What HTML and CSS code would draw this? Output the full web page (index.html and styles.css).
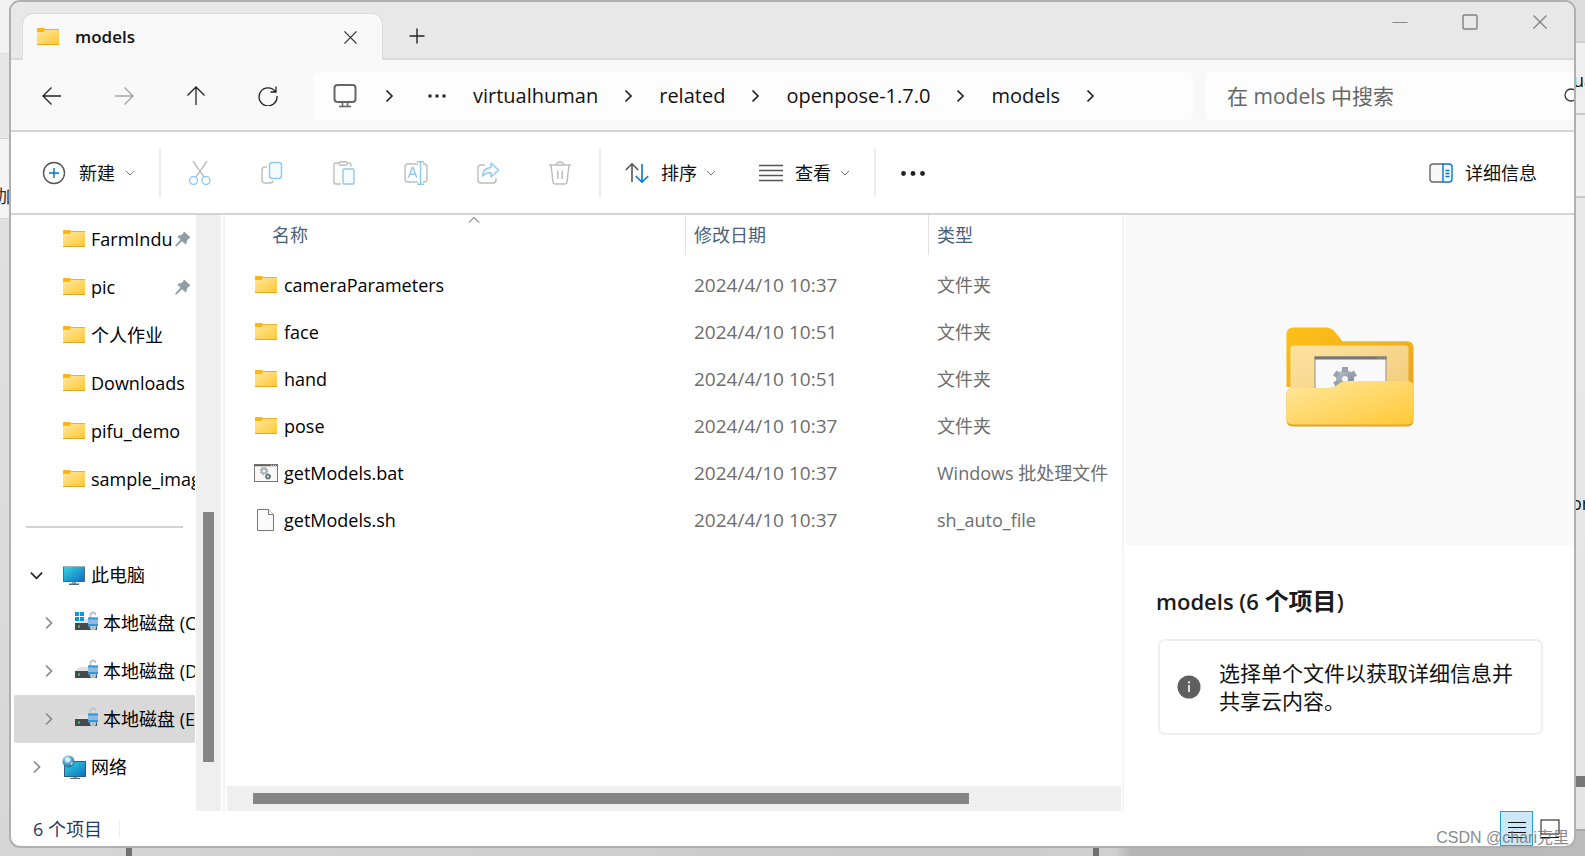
FILE: index.html
```html
<!DOCTYPE html>
<html lang="zh-CN">
<head>
<meta charset="utf-8">
<title>models</title>
<link rel="stylesheet" href="styles.css">
</head>
<body>
<svg class="defs" aria-hidden="true">
  <defs>
    <linearGradient id="gFolder" x1="0" y1="0" x2="1" y2="1"><stop offset="0" stop-color="#ffe79d"/><stop offset="1" stop-color="#ffc936"/></linearGradient>
    <linearGradient id="gBack" x1="0" y1="0" x2="1" y2="1"><stop offset="0" stop-color="#fdc117"/><stop offset="1" stop-color="#e8a420"/></linearGradient>
    <linearGradient id="gInner" x1="0" y1="0" x2="1" y2="1"><stop offset="0" stop-color="#fde3a0"/><stop offset="1" stop-color="#f0c877"/></linearGradient>
    <linearGradient id="gScreen" x1="0" y1="0" x2="1" y2="1"><stop offset="0" stop-color="#35d5e0"/><stop offset="1" stop-color="#0c6fc4"/></linearGradient>
    <linearGradient id="gGear" x1="0" y1="0" x2="1" y2="1"><stop offset="0" stop-color="#b3bcc5"/><stop offset="1" stop-color="#7e8a96"/></linearGradient>
    <radialGradient id="gGlobe" cx="0.4" cy="0.3" r="0.8"><stop offset="0" stop-color="#c4e8f5"/><stop offset="0.5" stop-color="#4fa3c9"/><stop offset="1" stop-color="#1b5e8e"/></radialGradient>
    <symbol id="folder" viewBox="0 0 24 24">
      <path d="M1 5V4q0-1 1-1h6l1.500 1.500H23V19H1z" fill="#fbb91a"/>
      <rect x="1" y="5" width="22" height="14" fill="url(#gFolder)"/>
      <path d="M1 4q0-1 1-1h5.500q1 0 1 1v1.500L7.500 7H1z" fill="#fbb615"/>
      <path d="M9 4.500h14" stroke="#f0b028"/>
      <path d="M1 19.500h22" stroke="#e9a81f"/>
    </symbol>
    <symbol id="pin" viewBox="0 0 16 16"><path d="M9 0.500 15.500 6.500q-.5 1-1.700 1l-2 2.500q.4 2.200-1 3.500L7 10.200 1.500 15.500H.5V14L5.500 8.800 2.300 5.500Q3.500 4 6 4.300L8.300 2.300Q8.200 1 9 .5z" fill="#919ca4"/></symbol>
    <symbol id="pc" viewBox="0 0 24 24">
      <rect x="1" y="3" width="22" height="16" fill="#4a6b80"/><rect x="2" y="4" width="20" height="14" fill="url(#gScreen)"/>
      <path d="M1 3.500h22" stroke="#9fb0ba"/><rect x="10" y="19" width="4" height="2" fill="#9aa7b0"/><rect x="7" y="20.500" width="10" height="1.500" fill="#526675"/>
    </symbol>
    <symbol id="net" viewBox="0 0 24 24">
      <rect x="2" y="6" width="22" height="16" fill="#2c5f80"/><rect x="3" y="7" width="20" height="14" fill="url(#gScreen)"/>
      <rect x="11" y="22" width="4" height="1" fill="#9aa7b0"/><rect x="8" y="23" width="10" height="1" fill="#526675"/>
      <circle cx="6.500" cy="6.500" r="6" fill="url(#gGlobe)"/><path d="M3 3q3-1.500 5 .5T7 7 3.500 6zM8 8l3-1-1 3.500z" fill="#e3f3f8" opacity=".75"/>
    </symbol>
    <symbol id="disk" viewBox="0 0 24 24">
      <path d="M5.500 8H20l3 4H1z" fill="#dfe2e4"/><rect x="1" y="12" width="22" height="7" fill="#454a4c"/><rect x="4" y="14.500" width="2" height="2" fill="#35e04a"/>
      <path d="M16.500 7V4q0-2.500 2.500-2.500t2.500 2.500" fill="none" stroke="#b9c5cd" stroke-width="1.800"/>
      <rect x="14" y="6.500" width="10" height="9" rx="1" fill="#93b9d8"/><path d="M14 7.500h10M14 14h10" stroke="#2e97e4" stroke-width="2"/><path d="M16 15h6v3q-3 2.500-6 0z" fill="#b4bfc7"/>
    </symbol>
    <symbol id="winlogo" viewBox="0 0 10 10"><path d="M0 0h4.500v4.500H0zM5.500 0H10v4.500H5.500zM0 5.500h4.500V10H0zM5.500 5.500H10V10H5.500z" fill="#1295e0"/></symbol>
    <symbol id="right" viewBox="0 0 12 16"><path d="M3 2.500 8.500 8 3 13.500" fill="none" stroke="currentColor" stroke-width="1.700"/></symbol>
    <symbol id="down" viewBox="0 0 16 12"><path d="M2 3 8 9 14 3" fill="none" stroke="currentColor" stroke-width="1.800"/></symbol>
    <symbol id="caret" viewBox="0 0 10 10"><path d="M1 3 5 7 9 3" fill="none" stroke="currentColor"/></symbol>
    <symbol id="cross" viewBox="0 0 16 16"><path d="M1.500 1.500 14.500 14.500M14.500 1.500 1.500 14.500" fill="none" stroke="currentColor" stroke-width="1.300"/></symbol>
    <symbol id="bat" viewBox="0 0 24 24"><rect x=".5" y="3.500" width="23" height="17" fill="#f8f8f8" stroke="#777"/><path d="M0 4.500h24" stroke="#666" stroke-width="1.500"/><path d="M17 4.500h6" stroke="#ddd" stroke-dasharray="1 1"/><circle cx="10" cy="10" r="2.400" fill="none" stroke="#a4adb6" stroke-width="1.800"/><circle cx="10" cy="10" r="3.700" fill="none" stroke="#a4adb6" stroke-width="1.200" stroke-dasharray="1.500 1.400"/><circle cx="14" cy="15.500" r="1.800" fill="none" stroke="#606a73" stroke-width="1.500"/><circle cx="14" cy="15.500" r="2.700" fill="none" stroke="#606a73" stroke-dasharray="1.200 1.200"/></symbol>
    <symbol id="doc" viewBox="0 0 24 24"><path d="M3.500 1.500h11l5 5v16h-16z" fill="#fafafa" stroke="#777"/><path d="M14.500 1.500v5h5" fill="#fff" stroke="#777"/></symbol>
  </defs>
</svg>

<div class="desktop">
  <div class="behind-left"><span>加</span></div>
  <div class="behind-right"><span class="frag-a">ua</span><span class="frag-b">or</span><i></i></div>
  <div class="behind-bottom"><i></i><b></b></div>

  <div class="window">
    <header class="titlebar">
      <div class="tab">
        <svg class="i24"><use href="#folder"/></svg>
        <span class="tab-name">models</span>
        <button class="tab-close" aria-label="关闭标签页"><svg class="i14"><use href="#cross"/></svg></button>
      </div>
      <button class="tab-new" aria-label="新标签页"><svg class="i16" viewBox="0 0 16 16"><path d="M8 .5v15M.5 8h15" stroke="#222" stroke-width="1.400"/></svg></button>
      <div class="caption">
        <button aria-label="最小化"><svg class="i16" viewBox="0 0 16 16"><path d="M.5 8.500h15" stroke="#888"/></svg></button>
        <button aria-label="最大化"><svg class="i16" viewBox="0 0 16 16"><rect x="1" y="1" width="14" height="14" rx="1" fill="none" stroke="#808080" stroke-width="1.400"/></svg></button>
        <button aria-label="关闭"><svg class="i16"><use href="#cross"/></svg></button>
      </div>
    </header>

    <nav class="navbar">
      <button class="nav-btn" aria-label="后退"><svg class="i20" viewBox="0 0 20 20"><path d="M19 10H1.500M9.500 1.500 1 10l8.500 8.500" /></svg></button>
      <button class="nav-btn off" aria-label="前进"><svg class="i20" viewBox="0 0 20 20"><path d="M1 10h17.500M10.500 1.500 19 10l-8.500 8.500"/></svg></button>
      <button class="nav-btn" aria-label="上移"><svg class="i20" viewBox="0 0 20 20"><path d="M10 19V1.500M1.500 9.500 10 1l8.500 8.500"/></svg></button>
      <button class="nav-btn" aria-label="刷新"><svg class="i20" viewBox="0 0 20 20"><path d="M17.300 5.500A9 9 0 1 0 19 10M18 .5v5.500h-5.500"/></svg></button>
      <div class="address">
        <svg class="i24" viewBox="0 0 24 24" fill="none" stroke="#666" stroke-width="2"><rect x="1.500" y="1" width="21" height="17" rx="3"/><path d="M9.500 18v4M14.500 18v4M6 22.500h12" stroke-width="1.600"/></svg>
        <svg class="sep"><use href="#right"/></svg>
        <button class="dots" aria-label="更多路径"><svg viewBox="0 0 18 4"><path d="M.5.500h3v3h-3zM7.500.500h3v3h-3zM14.500.500h3v3h-3z" fill="#222"/></svg></button>
        <button>virtualhuman</button>
        <svg class="sep"><use href="#right"/></svg>
        <button>related</button>
        <svg class="sep"><use href="#right"/></svg>
        <button>openpose-1.7.0</button>
        <svg class="sep"><use href="#right"/></svg>
        <button>models</button>
        <svg class="sep"><use href="#right"/></svg>
      </div>
      <div class="search">
        <input type="text" placeholder="在 models 中搜索" aria-label="在 models 中搜索">
        <svg viewBox="0 0 10 20"><circle cx="7" cy="9" r="6" fill="none" stroke="#333" stroke-width="1.300"/></svg>
      </div>
    </nav>

    <div class="toolbar">
      <button class="cmd new"><svg class="i24" viewBox="0 0 24 24" fill="none"><circle cx="12" cy="12" r="10.500" stroke="#555" stroke-width="1.400"/><path d="M12 7v10M7 12h10" stroke="#0078d4" stroke-width="1.500"/></svg>新建<svg class="i10"><use href="#caret"/></svg></button>
      <span class="bar"></span>
      <button class="ico" aria-label="剪切"><svg class="i24" viewBox="0 0 24 24" fill="none" stroke-width="1.400"><path d="M5 0 16 16M19 0 8 16" stroke="#bdbdbd"/><circle cx="5.500" cy="19.500" r="4" stroke="#8fcaf2"/><circle cx="18" cy="19.500" r="4" stroke="#8fcaf2"/></svg></button>
      <button class="ico" aria-label="复制"><svg class="i24" viewBox="0 0 24 24" fill="none" stroke-width="1.500"><path d="M7 6H5q-3 0-3 3v10q0 3 3 3h5q3 0 3-2.500" stroke="#c0c0c0"/><rect x="9.500" y="1.500" width="12" height="16" rx="3" stroke="#8fcaf2" fill="#f5fbff"/></svg></button>
      <button class="ico" aria-label="粘贴"><svg class="i24" viewBox="0 0 24 24" fill="none" stroke-width="1.400"><path d="M7 2H3.500Q2 2 2 4v17q0 2 2 2h5M15 2h2.500Q19 2 19 4v1.500" stroke="#bdbdbd"/><rect x="7" y=".8" width="8" height="3.500" rx="1.700" stroke="#bdbdbd"/><rect x="11" y="8" width="11" height="15" rx="1" stroke="#8fcaf2" fill="#f5fbff"/></svg></button>
      <button class="ico" aria-label="重命名"><svg class="i24" viewBox="0 0 24 24" fill="none" stroke-width="1.400"><path d="M14 3H4Q1 3 1 6v12q0 3 3 3h10M19 3h1q3 0 3 3v12q0 3-3 3h-1" stroke="#bdbdbd"/><path d="M4.500 16.500 8.300 6.500h.6l3.800 10M6 13.300h5.300M13 .8h7M13 23.200h7M16.500.800v22.400" stroke="#8fcaf2" stroke-width="1.500"/></svg></button>
      <button class="ico" aria-label="共享"><svg class="i24" viewBox="0 0 24 24" fill="none" stroke-width="1.400" stroke-linejoin="round"><path d="M9 4H5Q2 4 2 7v12q0 3 3 3h12q3 0 3-3v-2" stroke="#bdbdbd"/><path d="M15 2v4.500Q7 7 6.500 15 9.500 11.500 15 11.700V16l7.500-7z" stroke="#8fcaf2" fill="#f5fbff"/></svg></button>
      <button class="ico" aria-label="删除"><svg class="i24" viewBox="0 0 24 24" fill="none" stroke="#bdbdbd" stroke-width="1.500"><path d="M1 4h22M8.500 4q0-3 3.500-3t3.500 3M3 4l2 17q.3 2 2 2h10q1.700 0 2-2l2-17M9.800 9.500v8.500M14.200 9.500v8.500"/></svg></button>
      <span class="bar"></span>
      <button class="cmd"><svg class="i24" viewBox="0 0 24 24" fill="none" stroke-width="1.600"><path d="M7 21V3M.8 9 7 2.800 13.200 9" stroke="#555"/><path d="M17 3v18M10.800 15 17 21.200 23.200 15" stroke="#0078d4"/></svg>排序<svg class="i10"><use href="#caret"/></svg></button>
      <button class="cmd view"><svg class="i24" viewBox="0 0 24 24"><path d="M0 4.500h24M0 9.500h24M0 14.500h24M0 19.500h24" stroke="#555" stroke-width="1.400"/></svg>查看<svg class="i10"><use href="#caret"/></svg></button>
      <span class="bar"></span>
      <button class="ico more" aria-label="查看更多"><svg class="i24" viewBox="0 0 24 24" fill="#222"><circle cx="2.500" cy="12.500" r="2.400"/><circle cx="12" cy="12.500" r="2.400"/><circle cx="21.500" cy="12.500" r="2.400"/></svg></button>
      <button class="cmd details-toggle"><svg class="i24" viewBox="0 0 24 24" fill="none" stroke-width="1.400"><path d="M14 3H4Q1 3 1 6v12q0 3 3 3h10" stroke="#666" fill="#f7f7f7"/><path d="M14 3h6q3 0 3 3v12q0 3-3 3h-6z" stroke="#0078d4" fill="#f2f9ff"/><path d="M16.500 9.500h4M16.500 12.500h4M16.500 15.500h4" stroke="#0078d4"/></svg>详细信息</button>
    </div>

    <div class="content">
      <aside class="sidebar">
        <ul class="tree">
          <li><span class="tw"></span><svg class="i24"><use href="#folder"/></svg><span class="lbl">FarmIndustry</span><svg class="pin"><use href="#pin"/></svg></li>
          <li><span class="tw"></span><svg class="i24"><use href="#folder"/></svg><span class="lbl">pic</span><svg class="pin"><use href="#pin"/></svg></li>
          <li><span class="tw"></span><svg class="i24"><use href="#folder"/></svg><span class="lbl">个人作业</span></li>
          <li><span class="tw"></span><svg class="i24"><use href="#folder"/></svg><span class="lbl">Downloads</span></li>
          <li><span class="tw"></span><svg class="i24"><use href="#folder"/></svg><span class="lbl">pifu_demo</span></li>
          <li><span class="tw"></span><svg class="i24"><use href="#folder"/></svg><span class="lbl">sample_images</span></li>
          <li class="rule"><hr></li>
          <li><span class="tw open"><svg class="i14"><use href="#down"/></svg></span><svg class="i24"><use href="#pc"/></svg><span class="lbl">此电脑</span></li>
          <li class="sub"><span class="tw"><svg class="i16"><use href="#right"/></svg></span><span class="sys"><svg class="i24"><use href="#disk"/></svg><svg class="logo"><use href="#winlogo"/></svg></span><span class="lbl">本地磁盘 (C:)</span></li>
          <li class="sub"><span class="tw"><svg class="i16"><use href="#right"/></svg></span><svg class="i24"><use href="#disk"/></svg><span class="lbl">本地磁盘 (D:)</span></li>
          <li class="sub selected"><span class="tw"><svg class="i16"><use href="#right"/></svg></span><svg class="i24"><use href="#disk"/></svg><span class="lbl">本地磁盘 (E:)</span></li>
          <li><span class="tw"><svg class="i16"><use href="#right"/></svg></span><svg class="i24"><use href="#net"/></svg><span class="lbl">网络</span></li>
        </ul>
        <div class="vscroll"><i></i></div>
      </aside>

      <main class="files">
        <table>
          <colgroup><col class="c-name"><col class="c-date"><col></colgroup>
          <thead><tr><th>名称<svg class="sort" viewBox="0 0 12 8"><path d="M1 6.500 6 1.500l5 5" fill="none" stroke="#444"/></svg></th><th>修改日期</th><th>类型</th></tr></thead>
          <tbody>
            <tr><td><span class="name"><svg class="i24"><use href="#folder"/></svg>cameraParameters</span></td><td class="date">2024/4/10 10:37</td><td>文件夹</td></tr>
            <tr><td><span class="name"><svg class="i24"><use href="#folder"/></svg>face</span></td><td class="date">2024/4/10 10:51</td><td>文件夹</td></tr>
            <tr><td><span class="name"><svg class="i24"><use href="#folder"/></svg>hand</span></td><td class="date">2024/4/10 10:51</td><td>文件夹</td></tr>
            <tr><td><span class="name"><svg class="i24"><use href="#folder"/></svg>pose</span></td><td class="date">2024/4/10 10:37</td><td>文件夹</td></tr>
            <tr><td><span class="name"><svg class="i24"><use href="#bat"/></svg>getModels.bat</span></td><td class="date">2024/4/10 10:37</td><td>Windows 批处理文件</td></tr>
            <tr><td><span class="name"><svg class="i24"><use href="#doc"/></svg>getModels.sh</span></td><td class="date">2024/4/10 10:37</td><td>sh_auto_file</td></tr>
          </tbody>
        </table>
        <div class="hscroll"><i></i></div>
      </main>

      <section class="preview">
        <div class="thumb">
          <svg viewBox="0 0 128 100" aria-label="文件夹">
            <path d="M.5 60V7q0-6.500 7-6.500h32q6 0 10 5l7 8.800H121q6.500 0 6.500 6.500V60z" fill="url(#gBack)"/>
            <rect x="4.500" y="18.500" width="118" height="60" rx="3" fill="url(#gInner)"/>
            <rect x="29" y="30" width="71" height="45" fill="#f9f9f9" stroke="#8e8e8e"/>
            <path d="M28.500 31h72" stroke="#777" stroke-width="3"/>
            <path d="M92 31h7" stroke="#aaa" stroke-dasharray="1 1"/>
            <circle cx="59" cy="52" r="6" fill="none" stroke="url(#gGear)" stroke-width="6"/>
            <path d="M59 40v5M48.600 46l4 2.500M69.400 46l-4 2.500M48.600 58l4-2.500M69.400 58l-4-2.500" stroke="#97a2ae" stroke-width="6"/>
            <path d="M.5 67q0-6 6-6H43q5 0 8.500-3l2.500-2q3-2 6-2h61q6.500 0 6.500 6v33q0 6.500-6.500 6.500H7q-6.500 0-6.500-6.500z" fill="#e2a52a"/>
            <path d="M.5 67q0-6 6-6H43q5 0 8.500-3l2.500-2q3-2 6-2h61q6.500 0 6.500 6v31q0 6.500-6.500 6.500H7q-6.500 0-6.500-6.500z" fill="url(#gFolder)"/>
          </svg>
        </div>
        <h2>models (6 <span>个项目</span>)</h2>
        <div class="info">
          <svg class="i24" viewBox="0 0 24 24"><circle cx="12" cy="12" r="11.500" fill="#5f5f5f"/><path d="M12 10v7" stroke="#fff" stroke-width="1.600"/><circle cx="12" cy="7.300" r="1.100" fill="#fff"/></svg>
          <p>选择单个文件以获取详细信息并共享云内容。</p>
        </div>
      </section>
    </div>

    <footer class="status">
      <span class="count">6 个项目</span>
      <button class="mode on" aria-label="详细信息视图"><svg viewBox="0 0 20 20"><path d="M1 3.500h18M1 8.500h18M1 13.500h18M1 18.500h18" stroke="#111"/></svg></button>
      <button class="mode" aria-label="大图标视图"><svg viewBox="0 0 20 20"><rect x="1" y="1" width="18" height="14" fill="#fff" stroke="#111"/><path d="M1 18.500h18" stroke="#111"/></svg></button>
    </footer>
  </div>
  <div class="watermark">CSDN @chari克里</div>
</div>
</body>
</html>
```
FILE: styles.css
```css
* { box-sizing: border-box; }
html, body { height: 100%; margin: 0; }
body { font: 18px/24px "Open Sans", "Noto Sans CJK SC", sans-serif; color: #111; overflow: hidden; }
button, input { font: inherit; color: inherit; border: 0; background: none; padding: 0; margin: 0; }
ul, p, h2 { margin: 0; padding: 0; }
svg { display: block; flex: none; }
.defs { position: absolute; width: 0; height: 0; }
.i10 { width: 10px; height: 10px; }
.i14 { width: 15px; height: 15px; }
.i16 { width: 16px; height: 16px; }
.i20 { width: 20px; height: 20px; }
.i24 { width: 24px; height: 24px; }

.desktop { position: relative; height: 100%; padding: 0 9px 8px; background: #c8c8c8; display: flex; overflow: hidden; }
.behind-left { position: absolute; left: 0; top: 0; bottom: 0; width: 20px; background: linear-gradient(#f1f1f1 0 53px, #dcdcdc 53px 54px, #e6e6e6 54px 138px, #d0d0d0 138px 139px, #f3f3f3 139px 218px, #d5d5d5 218px 219px, #e0e0e0 219px, #d6d6d6); }
.behind-left span { position: absolute; left: -3px; top: 184px; color: #333; }
.behind-right { position: absolute; right: 0; top: 0; bottom: 0; width: 20px; background: linear-gradient(#dcdcdc 0 41px, #cfcfcf 41px 43px, #efefef 43px 113px, #c9c9c9 113px 115px, #f0f0f0 115px 196px, #c9c9c9 196px 198px, #e9e9e9 198px, #e4e4e4 829px, #a8a8a8 829px 831px, #bbb 831px); }
.behind-right span { position: absolute; left: 8px; }
.behind-right .frag-a { top: 68px; }
.behind-right .frag-b { left: 6px; top: 491px; }
.behind-right i { position: absolute; left: 0; right: 0; top: 776px; height: 11px; background: #777; }
.behind-bottom { position: absolute; left: 18px; right: 0; bottom: 0; height: 20px; background: linear-gradient(90deg, #d6d6d6, #c9c9c9 60%, #d0d0d0 70%, #b5b5b5 71%, #bbb); }
.behind-bottom i, .behind-bottom b { position: absolute; top: 0; bottom: 0; width: 6px; background: #707070; left: 108px; }
.behind-bottom b { left: 1075px; }

.window { position: relative; flex: 1; min-width: 0; display: flex; flex-direction: column; border: 2px solid #b0b0b0; border-radius: 11px; background: #fff; overflow: hidden; }

.titlebar { display: flex; flex: none; height: 58px; padding: 11px 0 0 11px; background: #e8e8e8; border-bottom: 2px solid #d9d9d9; }
.tab { display: flex; align-items: center; width: 361px; height: 47px; margin-bottom: -2px; padding: 0 24px 0 13px; background: #f8f8f8; border: 1px solid #dcdcdc; border-bottom: 0; border-radius: 11px 11px 0 0; }
.tab-name { margin-left: 15px; font-weight: 600; font-size: 17px; flex: 1; }
.tab-close { color: #333; }
.tab-new { align-self: center; margin-left: 26px; }
.caption { display: flex; margin-left: auto; padding: 1px 26px 0 0; gap: 54px; align-items: flex-start; color: #808080; }

.navbar { display: flex; flex: none; height: 72px; padding: 12px 0 10px 5px; background: #f8f8f8; border-bottom: 2px solid #d4d4d4; font-size: 20px; }
.nav-btn { width: 72px; display: grid; place-items: center; }
.nav-btn path { fill: none; stroke: #222; stroke-width: 1.300; }
.nav-btn.off path { stroke: #a3a3a3; }
.address { display: flex; align-items: center; flex: 1; min-width: 0; margin-left: 9px; padding-left: 20px; background: #fdfdfd; border-radius: 6px; }
.address .sep { width: 61px; height: 16px; color: #222; }
.address .dots { width: 34px; margin-right: 19px; }
.address .i24 + .sep { margin-left: 2px; }
.dots svg { width: 18px; height: 4px; margin: 0 auto; }
.search { display: flex; align-items: center; width: 369px; margin-left: 12px; padding-left: 22px; background: #fdfdfd; border-radius: 6px 0 0 6px; }
.search input { flex: 1; min-width: 0; font-size: 21px; }
.search input::placeholder { color: #666; opacity: 1; }
.search svg { width: 10px; height: 20px; }

.toolbar { display: flex; flex: none; align-items: center; height: 83px; padding-left: 31px; border-bottom: 2px solid #d4d4d4; }
.cmd { display: flex; align-items: center; gap: 12px; }
.cmd .i10 { color: #777; margin-left: -3px; }
.cmd + .bar { margin-left: 24px; }
.cmd.new { gap: 13px; }
.bar { width: 2px; height: 48px; background: #ededed; }
.ico { width: 72px; display: grid; place-items: center; }
.ico + .bar { margin-left: 3px; }
.bar + .ico { margin-left: 3px; }
.bar + .more { margin-left: 1px; }
.bar + .cmd { margin-left: 24px; }
.cmd.view { margin-left: 43px; }
.details-toggle { margin-left: auto; margin-right: 37px; }

.content { display: flex; flex: 1; min-height: 0; }
.sidebar { display: flex; width: 214px; flex: none; border-right: 2px solid #f4f4f4; padding-right: 2px; }
.tree { list-style: none; flex: 1; min-width: 0; padding: 0 1px 0 3px; overflow: hidden; color: #000; }
.tree li { display: flex; align-items: center; height: 48px; overflow: hidden; border-radius: 2px; }
.tree .tw { width: 48px; padding-right: 3px; flex: none; display: grid; place-items: center; color: #8a8a8a; }
.tree .open { color: #222; }
.tree .sub { padding-left: 12px; }
.tree .selected { background: #d9d9d9; }
.lbl { margin-left: 5px; flex: 1; min-width: 0; overflow: hidden; white-space: nowrap; }
.pin { width: 16px; height: 16px; margin: 0 4px 0 3px; }
.sys { position: relative; }
.sys .logo { position: absolute; left: 1px; top: 1px; width: 9px; height: 9px; }
.tree hr { width: 158px; margin: 0 12px; border: 0; height: 2px; background: #d4d4d4; }
.vscroll { width: 25px; background: #efefef; display: flex; justify-content: center; align-items: flex-end; }
.vscroll i { width: 11px; height: 42%; margin-bottom: 49px; background: #858585; }

.files { flex: 1; min-width: 0; display: flex; flex-direction: column; justify-content: space-between; padding-left: 2px; padding-right: 1px; }
table { width: 100%; table-layout: fixed; border-collapse: collapse; }
.c-name { width: 458px; }
.c-date { width: 243px; }
th { position: relative; height: 46px; padding: 0 0 6px 9px; font-weight: 400; text-align: left; color: #4c607a; background: linear-gradient(#e2e2e2, #e2e2e2) left top / 1px 40px no-repeat; }
th:first-child { padding-left: 45px; background: none; }
.sort { position: absolute; left: 241px; top: 1px; width: 12px; height: 8px; }
td { height: 47px; padding: 0 0 0 9px; color: #6d6d6d; white-space: nowrap; }
td:first-child { padding-left: 27px; color: #000; }
td.date { font-size: 19px; }
.name { display: flex; align-items: center; gap: 6px; }
.hscroll { height: 25px; background: #efefef; padding: 7px 26px; }
.hscroll i { display: block; width: 85%; height: 11px; background: #858585; }

.preview { width: 452px; flex: none; border-left: 2px solid #f5f5f5; padding-left: 2px; }
.thumb { height: 330px; background: #f9f9f9; display: grid; place-items: center; }
.thumb svg { width: 128px; height: 100px; margin-bottom: 6px; }
.preview h2 { margin: 40px 0 0 30px; font-size: 22px; line-height: 32px; font-weight: 600; color: #1b1b1b; }
.preview h2 span { font-size: 24px; font-weight: 700; }
.info { display: flex; align-items: center; gap: 18px; margin: 22px 31px 0 32px; height: 96px; padding: 0 24px 0 17px; border: 2px solid #efefef; border-radius: 7px; }
.info p { font-size: 21px; line-height: 28px; }

.status { display: flex; flex: none; align-items: center; height: 35px; padding: 0 8px 0 22px; color: #1f3a63; }
.count { flex: 1; background: linear-gradient(#eee, #eee) 86px center / 1px 16px no-repeat; }
.mode { width: 33px; height: 35px; display: grid; place-items: center; }
.mode svg { width: 20px; height: 20px; }
.mode.on { background: #cce8f7; border: 1px solid #26a0da; }
.watermark { position: absolute; right: 16px; bottom: 6px; font: 16px/24px "Liberation Sans", "Noto Sans CJK SC", sans-serif; color: #777; opacity: 0.850; }
```
